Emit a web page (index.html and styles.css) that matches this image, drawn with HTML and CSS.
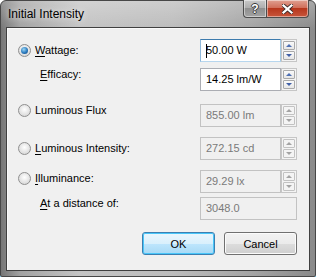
FILE: index.html
```html
<!DOCTYPE html>
<html lang="en">

<head>
    <meta charset="UTF-8">
    <meta name="viewport" content="width=device-width, initial-scale=1.0">
    <title>Initial Intensity</title>
    <link rel="stylesheet" href="styles.css">
</head>

<body>

    <div class="window">
        <div class="titlebar">
            <span class="title">Initial Intensity</span>
            <div class="caption-buttons">
                <div class="cap-btn help">?</div>
                <div class="cap-btn close">
                    <svg width="11" height="10" viewBox="0 0 11 10">
                        <path d="M1.5 1.5 L9.5 8.5 M9.5 1.5 L1.5 8.5" stroke="#3a2a28" stroke-width="4" stroke-linecap="square" fill="none" />
                        <path d="M1.5 1.5 L9.5 8.5 M9.5 1.5 L1.5 8.5" stroke="#fff" stroke-width="2.2" stroke-linecap="square" fill="none" />
                    </svg>
                </div>
            </div>
        </div>

        <div class="client">
            <div class="fields">
                <!-- Wattage -->
                <div class="option off-5">
                    <span class="radio checked"></span>
                    <span class="label"><u>W</u>attage:</span>
                </div>
                <div class="spin">
                    <div class="box focused"><span class="caret"></span>50.00 W</div>
                    <div class="spin-buttons">
                        <div class="spin-btn"><span class="arrow up"></span></div>
                        <div class="spin-btn"><span class="arrow down"></span></div>
                    </div>
                </div>

                <!-- Efficacy -->
                <div class="option sub off-0">
                    <span class="label"><u>E</u>fficacy:</span>
                </div>
                <div class="spin">
                    <div class="box">14.25 lm/W</div>
                    <div class="spin-buttons">
                        <div class="spin-btn"><span class="arrow up"></span></div>
                        <div class="spin-btn"><span class="arrow down"></span></div>
                    </div>
                </div>

                <!-- Luminous Flux -->
                <div class="option off-0">
                    <span class="radio"></span>
                    <span class="label">Luminous Flux</span>
                </div>
                <div class="spin disabled">
                    <div class="box">855.00 lm</div>
                    <div class="spin-buttons">
                        <div class="spin-btn"><span class="arrow up"></span></div>
                        <div class="spin-btn"><span class="arrow down"></span></div>
                    </div>
                </div>

                <!-- Luminous Intensity -->
                <div class="option off-5">
                    <span class="radio"></span>
                    <span class="label"><u>L</u>uminous Intensity:</span>
                </div>
                <div class="spin disabled">
                    <div class="box">272.15 cd</div>
                    <div class="spin-buttons">
                        <div class="spin-btn"><span class="arrow up"></span></div>
                        <div class="spin-btn"><span class="arrow down"></span></div>
                    </div>
                </div>

                <!-- Illuminance -->
                <div class="option off-2">
                    <span class="radio"></span>
                    <span class="label"><u>I</u>lluminance:</span>
                </div>
                <div class="spin disabled">
                    <div class="box">29.29 lx</div>
                    <div class="spin-buttons">
                        <div class="spin-btn"><span class="arrow up"></span></div>
                        <div class="spin-btn"><span class="arrow down"></span></div>
                    </div>
                </div>

                <!-- Distance -->
                <div class="option sub off-0">
                    <span class="label"><u>A</u>t a distance of:</span>
                </div>
                <div class="spin disabled">
                    <div class="box wide">3048.0</div>
                </div>
            </div>

            <div class="actions">
                <button type="button" class="btn default">OK</button>
                <button type="button" class="btn">Cancel</button>
            </div>
        </div>
    </div>

</body>

</html>
```

FILE: styles.css
```css
body {
    margin: 0;
    padding: 0;
    background-color: #fff;
    font-family: 'Liberation Sans', Arial, sans-serif;
    font-size: 11px;
    color: #000;
}

.window {
    width: 316px;
    height: 277px;
    box-sizing: border-box;
    border: 1px solid #474747;
    border-radius: 6px 6px 2px 2px;
    padding: 0 5px 5px 5px;
    background:
        linear-gradient(to bottom, rgba(255, 255, 255, 0.25), rgba(255, 255, 255, 0) 28px),
        linear-gradient(to right, #767676, #a2a2a2 6%, #c4c4c4 25%, #bcbcbc 55%, #a4a4a4 80%, #8a8a8a);
    box-shadow: 0 1px 0 #2fb2e6;
    display: flex;
    flex-direction: column;
}

/* title bar */

.titlebar {
    height: 26px;
    display: flex;
    align-items: flex-start;
    flex-shrink: 0;
}

.title {
    font-size: 12px;
    line-height: 14px;
    padding: 6px 0 0 2px;
    color: #000;
    text-shadow: 0 0 6px rgba(255, 255, 255, 0.9);
}

.caption-buttons {
    display: flex;
    margin-left: auto;
    margin-top: -1px;
    margin-right: 1px;
}

.cap-btn {
    height: 18px;
    box-sizing: border-box;
    border: 1px solid #4d4d4d;
    border-top: none;
    display: flex;
    align-items: center;
    justify-content: center;
    box-shadow: inset 0 0 0 1px rgba(255, 255, 255, 0.45);
}

.help {
    width: 23px;
    border-radius: 0 0 0 4px;
    border-right: none;
    background: linear-gradient(to bottom, #c9c9c9, #acacac 50%, #8f8f8f 50%, #a3a3a3);
    color: #fff;
    font-weight: bold;
    font-size: 12px;
    text-shadow: 1px 0 0 #3a3a3a, -1px 0 0 #3a3a3a, 0 1px 0 #3a3a3a, 0 -1px 0 #3a3a3a;
}

.close {
    width: 43px;
    border-radius: 0 0 4px 0;
    background: linear-gradient(to bottom, #e0a192, #cf6a55 50%, #b7371d 50%, #c8553b);
}

/* client area */

.client {
    flex: 1;
    border: 1px solid #404040;
    background-color: #f0f0f0;
    box-shadow: inset 1px 1px 0 #fafafa;
    padding: 11px 12px 0 11px;
}

.fields {
    display: grid;
    grid-template-columns: 1fr 97px;
    grid-template-rows: 29px 36px 33px 33px 27px 23px;
}

.option {
    display: flex;
    align-items: center;
    align-self: start;
    line-height: 13px;
}

.option.sub {
    padding-left: 22px;
}

.off-0 { margin-top: 0; }
.off-2 { margin-top: 2px; }
.off-5 { margin-top: 5px; }

.radio {
    width: 13px;
    height: 13px;
    box-sizing: border-box;
    border-radius: 50%;
    border: 1px solid #8f8f8f;
    background: radial-gradient(circle at 50% 40%, #ffffff, #e2e2e2 60%, #cfcfcf);
    margin-right: 4px;
    display: flex;
    align-items: center;
    justify-content: center;
}

.radio.checked::after {
    content: '';
    width: 7px;
    height: 7px;
    border-radius: 50%;
    background: radial-gradient(circle at 40% 35%, #9ad7f5, #2a79be 55%, #0d3f74);
}

u {
    text-decoration-thickness: 1px;
    text-underline-offset: 2px;
}

/* spin boxes */

.spin {
    display: flex;
    height: 23px;
}

.box {
    width: 81px;
    box-sizing: border-box;
    border: 1px solid #abadb3;
    background-color: #fff;
    padding-left: 5px;
    line-height: 21px;
    display: flex;
    align-items: center;
}

.box.focused {
    border-color: #3d7bad #a4c9e3 #b7d6ee #8fb8db;
}

.box.wide {
    width: 97px;
}

.caret {
    width: 1px;
    height: 14px;
    background-color: #000;
    margin-right: -1px;
}

.spin-buttons {
    width: 16px;
    box-sizing: border-box;
    border: 1px solid #c6c6c6;
    padding: 1px;
    display: flex;
    flex-direction: column;
    gap: 1px;
    background-color: #f4f4f4;
}

.spin-btn {
    flex: 1;
    border: 1px solid #a9a9a9;
    border-radius: 1px;
    background: linear-gradient(to bottom, #fafafa, #e6e6e6);
    display: flex;
    align-items: center;
    justify-content: center;
}

.arrow {
    width: 0;
    height: 0;
    border-left: 3px solid transparent;
    border-right: 3px solid transparent;
}

.arrow.up {
    border-bottom: 3px solid #4d6fb3;
}

.arrow.down {
    border-top: 3px solid #3f5fa6;
}

.spin.disabled .box {
    background-color: #f0f0f0;
    border-color: #c2c2c2;
    color: #7a7a7a;
}

.spin.disabled .spin-btn {
    border-color: #c2c2c2;
    background: #f4f4f4;
}

.spin.disabled .arrow.up {
    border-bottom-color: #a3a3a3;
}

.spin.disabled .arrow.down {
    border-top-color: #a3a3a3;
}

/* buttons */

.actions {
    display: flex;
    justify-content: flex-end;
    gap: 9px;
    margin-top: 12px;
}

.btn {
    width: 73px;
    height: 23px;
    border: 1px solid #707070;
    border-radius: 3px;
    background: linear-gradient(to bottom, #f2f2f2, #ebebeb 50%, #dddddd 50%, #cfcfcf);
    box-shadow: inset 0 0 0 1px #fbfbfb;
    font-family: 'Liberation Sans', Arial, sans-serif;
    font-size: 11px;
    color: #000;
    padding: 0;
}

.btn.default {
    border-color: #3c7fb1;
    background: linear-gradient(to bottom, #eaf6fd, #d9f0fc 50%, #bee6fd 50%, #a7d9f5);
    box-shadow: inset 0 0 0 1px #48c6f9;
}
```
